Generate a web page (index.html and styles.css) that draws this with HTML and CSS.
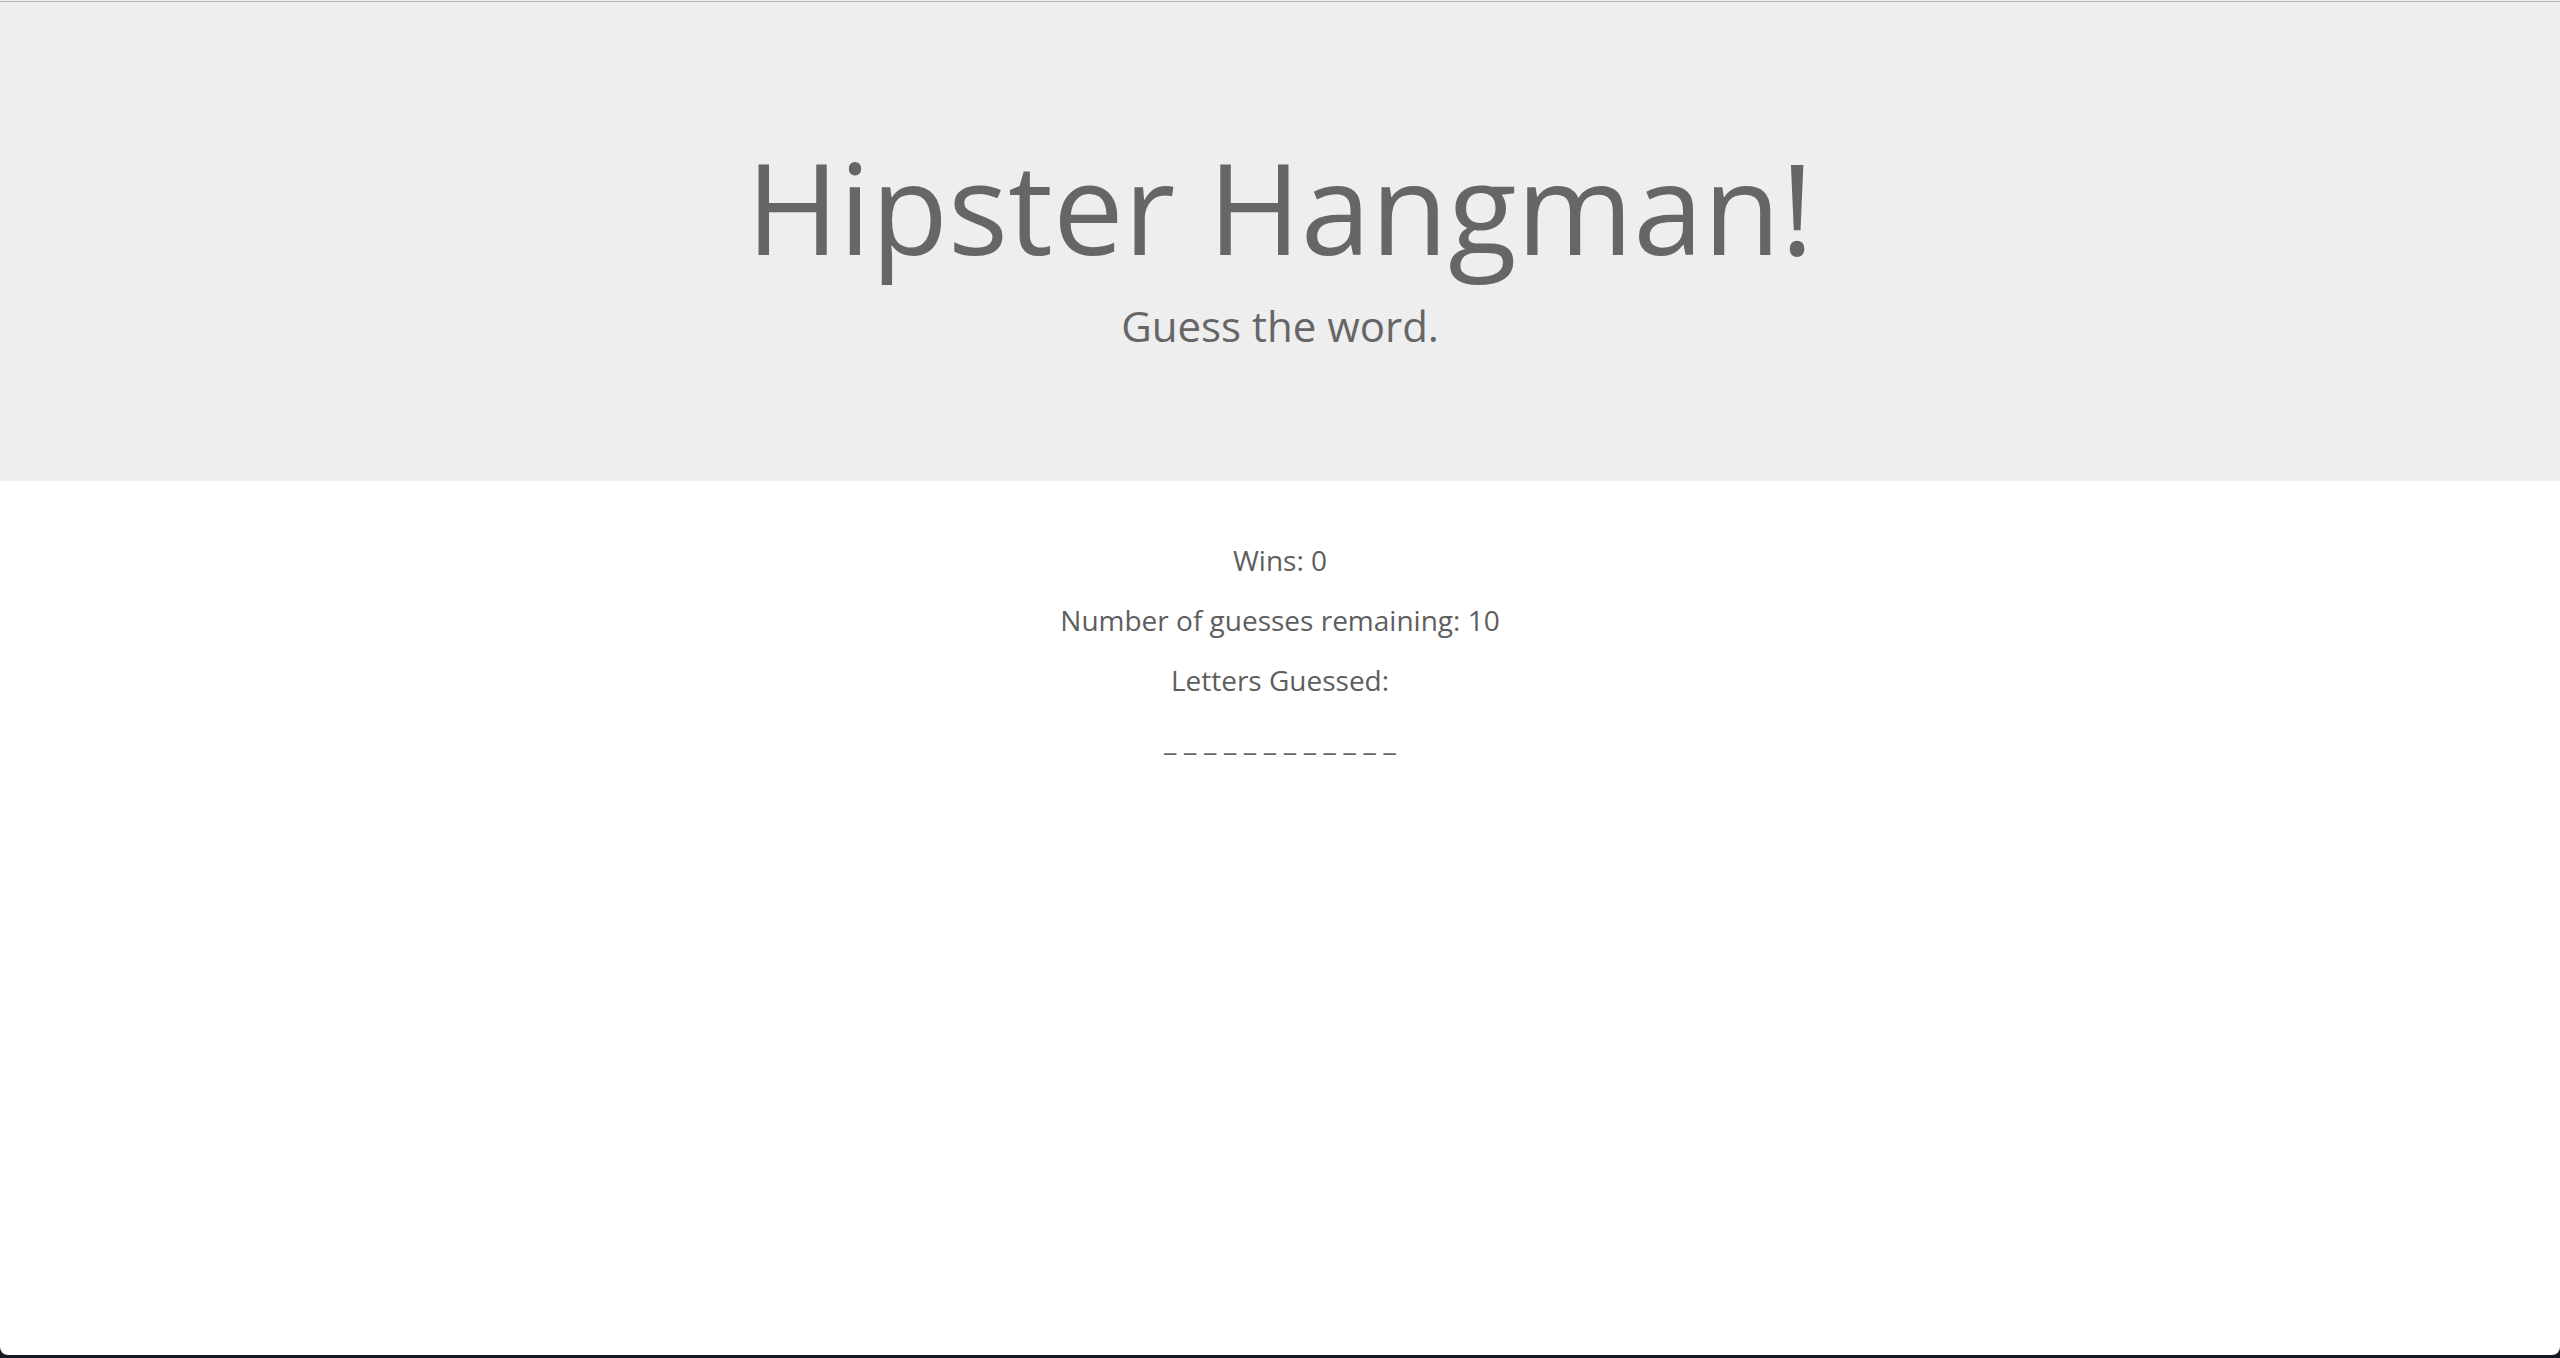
FILE: index.html
```html
<!DOCTYPE html>
<html lang="en">
<head>
<meta charset="utf-8">
<title>Hipster Hangman!</title>
<link rel="stylesheet" href="styles.css">
</head>
<body>
<div class="page">
  <div class="topline"></div>
  <header class="jumbotron">
    <h1 class="title">Hipster Hangman!</h1>
    <p class="lead">Guess the word.</p>
  </header>
  <main class="game">
    <p class="stat">Wins: 0</p>
    <p class="stat">Number of guesses remaining: 10</p>
    <p class="stat">Letters Guessed: </p>
    <p class="stat word">_ _ _ _ _ _ _ _ _ _ _ _</p>
  </main>
</div>
<div class="desk"></div>
</body>
</html>
```
FILE: styles.css
```css
html, body {
  margin: 0;
  padding: 0;
}
body {
  background: #141a24;
  font-family: "Open Sans", "Liberation Sans", sans-serif;
  color: #666666;
  font-size: 28px;
  line-height: 40px;
}
.page {
  background: #ffffff;
  height: 1355px;
  border-radius: 0 0 8px 8px;
  overflow: hidden;
  display: flex;
  flex-direction: column;
}
.topline {
  height: 1px;
  border-top: 1px solid #eeeeee;
  background: #b4b4b4;
  flex: none;
}
.jumbotron {
  background: #eeeeee;
  padding: 95px 30px 95px;
  text-align: center;
  flex: none;
}
.title {
  margin: 40px 0 20px;
  font-size: 126px;
  line-height: 1.1;
  font-weight: 400;
  color: #666666;
}
.lead {
  margin: 0 0 30px;
  font-size: 42px;
  line-height: 60px;
  font-weight: 400;
  color: #666666;
}
.game {
  margin-top: 59px;
  text-align: center;
}
.stat {
  margin: 0 0 20px;
  color: #5e5e5e;
}
.word {
  color: #666666;
  letter-spacing: 0.2px;
}
.desk {
  height: 3px;
}
```
